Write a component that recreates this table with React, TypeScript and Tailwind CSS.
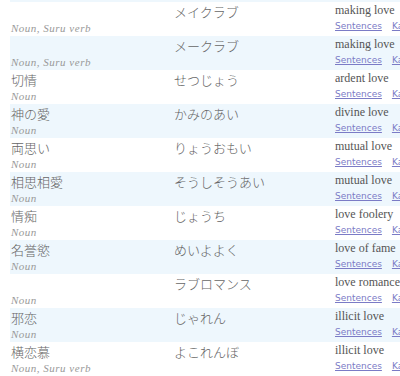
const rows = [
  { word: '', reading: 'メイクラブ', meaning: 'making love', pos: 'Noun, Suru verb' },
  { word: '', reading: 'メークラブ', meaning: 'making love', pos: 'Noun, Suru verb' },
  { word: '切情', reading: 'せつじょう', meaning: 'ardent love', pos: 'Noun' },
  { word: '神の愛', reading: 'かみのあい', meaning: 'divine love', pos: 'Noun' },
  { word: '両思い', reading: 'りょうおもい', meaning: 'mutual love', pos: 'Noun' },
  { word: '相思相愛', reading: 'そうしそうあい', meaning: 'mutual love', pos: 'Noun' },
  { word: '情痴', reading: 'じょうち', meaning: 'love foolery', pos: 'Noun' },
  { word: '名誉慾', reading: 'めいよよく', meaning: 'love of fame', pos: 'Noun' },
  { word: '', reading: 'ラブロマンス', meaning: 'love romance', pos: 'Noun' },
  { word: '邪恋', reading: 'じゃれん', meaning: 'illicit love', pos: 'Noun' },
  { word: '横恋慕', reading: 'よこれんぼ', meaning: 'illicit love', pos: 'Noun, Suru verb' },
];

const jpFont = "font-['Noto_Sans_CJK_JP',sans-serif] font-light";

const App = () => {
  return (
    <div className="h-[376px] w-[400px] overflow-hidden bg-white">
      <div className="ml-[10px] h-[2px] bg-[#eef7fd]" />
      {rows.map((r, i) => (
        <div
          key={i}
          className={
            'ml-[10px] grid h-[34px] grid-cols-[164px_160px_1fr] ' +
            (i % 2 === 1 ? 'bg-[#eef7fd]' : 'bg-white')
          }
        >
          <div className="flex flex-col pl-[1px]">
            <div className={jpFont + ' h-[19px] text-[13px] leading-[20px] text-[#666]'}>
              {r.word}
            </div>
            <div className="font-['Liberation_Serif',serif] text-[11px] italic leading-[14px] tracking-[0.5px] text-[#999]">
              {r.pos}
            </div>
          </div>
          <div className={jpFont + ' text-[13px] leading-[20px] text-[#666]'}>
            {r.reading}
          </div>
          <div className="flex flex-col whitespace-nowrap pl-[1px]">
            <div className="h-[18px] font-['Liberation_Serif',serif] text-[12px] leading-[16px] text-[#555]">
              {r.meaning}
            </div>
            <div className="flex gap-[10px] font-['DejaVu_Sans',sans-serif] text-[9px] leading-[12px] text-[#7b7bc6]">
              <span className="underline">Sentences</span>
              <span className="underline">Kanji</span>
            </div>
          </div>
        </div>
      ))}
    </div>
  );
};

export default App;
